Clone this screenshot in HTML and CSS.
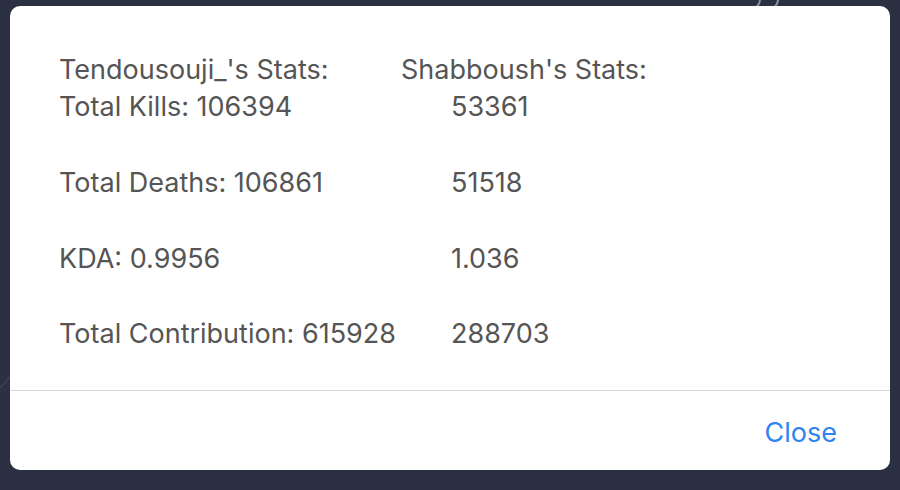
FILE: index.html
```html
<!DOCTYPE html>
<html>
<head>
<meta charset="utf-8">
<link rel="stylesheet" href="styles.css">
</head>
<body>
<div class="backdrop">
  <svg class="bg-art" width="900" height="490" viewBox="0 0 900 490" aria-hidden="true">
    <path d="M760 0 Q759.5 5 755 8" fill="none" stroke="#8d919b" stroke-width="2"/>
    <path d="M778 0 Q777.5 5 773 8" fill="none" stroke="#8d919b" stroke-width="2"/>
    <path d="M0 388 L10 377" fill="none" stroke="#3c4252" stroke-width="1.5"/>
  </svg>
  <div class="modal">
    <div class="modal-body">
      <div class="stats">
        <div class="head">Tendousouji_'s Stats:</div>
        <div class="head">Shabboush's Stats:</div>
        <div class="cell">Total Kills: 106394</div>
        <div class="cell val">53361</div>
        <div class="cell">Total Deaths: 106861</div>
        <div class="cell val">51518</div>
        <div class="cell">KDA: 0.9956</div>
        <div class="cell val">1.036</div>
        <div class="cell">Total Contribution: 615928</div>
        <div class="cell val">288703</div>
      </div>
    </div>
    <div class="modal-footer">
      <button class="close-btn">Close</button>
    </div>
  </div>
</div>
</body>
</html>
```
FILE: styles.css
```css
html, body {
  margin: 0;
  padding: 0;
  background: #2b3142;
}
.backdrop {
  position: relative;
  width: 900px;
  height: 490px;
  padding: 6px 10px 0 10px;
  box-sizing: border-box;
}
.bg-art {
  position: absolute;
  left: 0;
  top: 0;
}
.modal {
  position: relative;
  width: 880px;
  height: 464px;
  background: #ffffff;
  border-radius: 10px;
  display: flex;
  flex-direction: column;
  font-family: Inter, "Liberation Sans", sans-serif;
  color: #555555;
}
.modal-body {
  height: 385px;
  box-sizing: border-box;
  padding: 46px 0 0 49px;
  border-bottom: 1px solid #d9d9d9;
}
.stats {
  display: grid;
  grid-template-columns: 342px 1fr;
  font-size: 27px;
  line-height: 38px;
}
.head {
  height: 35px;
  line-height: 35px;
}
.cell {
  margin-bottom: 38px;
  position: relative;
  top: 1px;
}
.cell:nth-last-child(-n+2) {
  top: 0;
}
.val {
  padding-left: 50px;
}
.modal-footer {
  flex: 1;
  display: flex;
  align-items: center;
  justify-content: flex-end;
  padding: 3px 53px 0 0;
}
.close-btn {
  border: none;
  background: none;
  padding: 0;
  font-family: Inter, "Liberation Sans", sans-serif;
  font-size: 27px;
  color: #2f84f0;
  cursor: pointer;
}
```
